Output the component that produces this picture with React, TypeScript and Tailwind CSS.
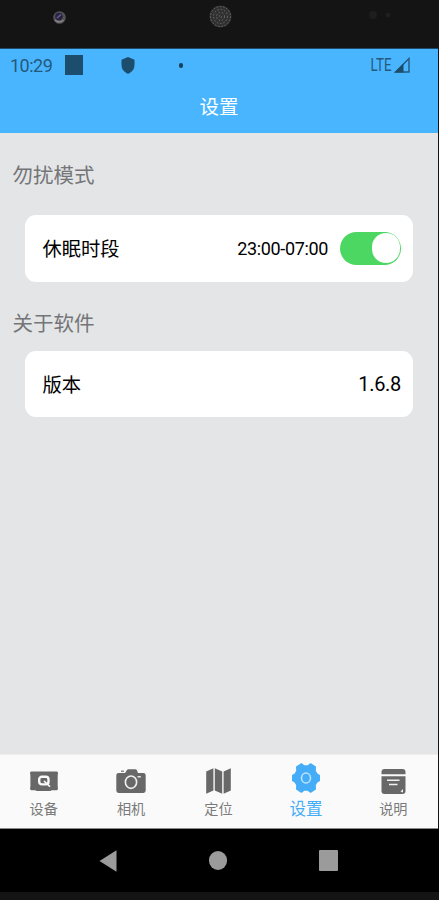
import { useState } from "react";
import type { ReactNode } from "react";

interface Tab {
  key: string;
  label: string;
  icon: ReactNode;
}

const tabs: Tab[] = [
  {
    key: "device",
    label: "设备",
    icon: (
      <svg width="28" height="20" viewBox="0 0 28 20">
        <path
          d="M1 0.5H27L28 1.5L27.7 5V15L28 18L27 19.2H22L20 20H7L5 19.2H1L0 18L0.4 15V5L0 1.5Z"
          fill="#686868"
        />
        <rect x="9.2" y="5.8" width="9.3" height="7.6" rx="2.6" fill="none" stroke="#fafafa" strokeWidth="2.4" />
        <path d="M14 10L20 15.6" stroke="#fafafa" strokeWidth="1.6" />
      </svg>
    ),
  },
  {
    key: "camera",
    label: "相机",
    icon: (
      <svg width="30" height="25" viewBox="0 0 30 25">
        <path
          d="M2.5 4H9L11 1Q11.4 0.3 12.3 0.3H19.5Q20.4 0.3 20.8 1L22 4H27.5Q29.7 4 29.7 6.2V21.6Q29.7 24 27.4 24H2.6Q0.3 24 0.3 21.6V6.2Q0.3 4 2.5 4Z"
          fill="#686868"
        />
        <path d="M5 3V1.5H8V3Z" fill="#8a8a8a" />
        <ellipse cx="15" cy="13.2" rx="5.6" ry="6.2" fill="none" stroke="#f0f0f0" strokeWidth="1.6" />
        <path d="M21.5 7.8H24.8" stroke="#f0f0f0" strokeWidth="1.4" />
      </svg>
    ),
  },
  {
    key: "map",
    label: "定位",
    icon: (
      <svg width="25" height="26" viewBox="0 0 25 26" fill="#686868">
        <path d="M0.2 3.5L7.4 0.2V22.5L0.2 25.8Z" />
        <path d="M8.8 0.2L16.2 3.5V25.8L8.8 22.5Z" />
        <path d="M17.6 3.5L24.8 0.2V22.5L17.6 25.8Z" />
      </svg>
    ),
  },
  {
    key: "settings",
    label: "设置",
    icon: (
      <svg width="28" height="30" viewBox="0 0 28 30">
        <path
          d="M9.5 1.2L12 3.2H16L18.5 1.2L23 4L22.8 8L24.5 11L27 12.5V17.5L24.5 19L22.8 22L23 26L18.5 28.8L16 26.8H12L9.5 28.8L5 26L5.2 22L3.5 19L1 17.5V12.5L3.5 11L5.2 8L5 4Z"
          fill="#45adf8"
          stroke="#45adf8"
          strokeWidth="2"
          strokeLinejoin="round"
        />
        <ellipse cx="14" cy="15" rx="4.5" ry="5" fill="none" stroke="#b9e3ff" strokeWidth="1.6" />
      </svg>
    ),
  },
  {
    key: "help",
    label: "说明",
    icon: (
      <svg width="25" height="25" viewBox="0 0 25 25">
        <path d="M3.5 0H21.5Q24.5 0 24.5 3V5.3H0.5V3Q0.5 0 3.5 0Z" fill="#686868" />
        <path d="M0.5 7.3H24.5V22Q24.5 25 21.5 25H3.5Q0.5 25 0.5 22Z" fill="#686868" />
        <path d="M6 11.3H18.5M8 15.5H16.5" stroke="#f0f0f0" strokeWidth="1.4" />
        <path d="M19.5 22.5L22 20V23.5Z" fill="#f0f0f0" />
      </svg>
    ),
  },
];

function Bezel() {
  return (
    <div className="h-12 bg-[#141414]">
      <svg width="439" height="48" viewBox="0 0 439 48">
        <circle cx="59.5" cy="17.5" r="6.3" fill="#555258" />
        <circle cx="59" cy="16.5" r="3.8" fill="#28243a" />
        <path d="M57 18L61 14.5" stroke="#655da0" strokeWidth="1.5" />
        <path d="M55 20Q59 24 63.5 20" stroke="#858188" strokeWidth="1.5" fill="none" />
        <circle cx="220.5" cy="16.5" r="11" fill="#303030" />
        <g fill="none" stroke="#707070" strokeDasharray="1.5 1.8">
          <circle cx="220.5" cy="16.5" r="10" />
          <circle cx="220.5" cy="16.5" r="7" />
          <circle cx="220.5" cy="16.5" r="4" />
          <circle cx="220.5" cy="16.5" r="1.2" />
        </g>
        <circle cx="373" cy="15" r="4" fill="#1e1e1e" />
        <circle cx="388" cy="15" r="2.5" fill="#1e1e1e" />
      </svg>
    </div>
  );
}

function StatusBar() {
  return (
    <div className="flex h-8 items-center pl-2.5 text-[18px] text-[#24597c]">
      <span className="w-[55px] tracking-[-0.5px]">10:29</span>
      <div className="h-5 w-[18px] bg-[#1d4d6d]" />
      <svg className="ml-[38px]" width="14" height="17" viewBox="0 0 14 17">
        <path d="M7 0L13.5 2.8V8Q13.5 14 7 17Q0.5 14 0.5 8V2.8Z" fill="#1d4d6d" />
      </svg>
      <div className="ml-[44px] h-[5px] w-1 rounded-full bg-[#183f5b]" />
      <span className="ml-auto mr-[3px] origin-right scale-x-[0.76] text-[17.5px]">LTE</span>
      <svg className="mr-[28px]" width="16" height="16" viewBox="0 0 16 16">
        <path d="M15 1.5V15H1.5Z" fill="none" stroke="#24597c" strokeWidth="1.4" />
        <path d="M0.5 15.5L9.5 6.5V15.5Z" fill="#1d4d6d" />
      </svg>
    </div>
  );
}

function Card({ label, children }: { label: string; children: ReactNode }) {
  return (
    <div className="ml-[24.5px] mr-[25px] flex h-[66.5px] items-center rounded-[11px] bg-white pl-[18px] pr-3 text-black">
      <span className="pt-[5px] text-[19.3px]">{label}</span>
      <div className="ml-auto flex items-center">{children}</div>
    </div>
  );
}

function App() {
  const [activeTab, setActiveTab] = useState("settings");
  const [sleepOn, setSleepOn] = useState(true);

  return (
    <div className="flex h-[900px] w-[439px] flex-col overflow-hidden bg-[#141414] font-['Roboto','Noto_Sans_CJK_SC',sans-serif]">
      <Bezel />
      <div className="flex h-[781px] w-[438px] flex-col bg-[#e4e5e7]">
        <div className="h-[84.5px] shrink-0 border-t border-[#1c4a6b] bg-[#4ab5ff]">
          <StatusBar />
          <h1 className="pt-[12px] text-center text-[19.5px] leading-[30px] text-white">设置</h1>
        </div>

        <div className="flex-1">
          <h2 className="pt-[28px] pl-[12.5px] text-[20.5px] leading-[30px] text-[#747577]">勿扰模式</h2>
          <div className="pt-[24.5px]">
            <Card label="休眠时段">
              <span className="text-[18px] tracking-[-0.35px]">23:00-07:00</span>
              <button
                className="ml-3 flex h-[33px] w-[61px] items-center rounded-full bg-[#4cd763] px-[1.5px]"
                onClick={() => setSleepOn(!sleepOn)}
              >
                <span className={sleepOn ? "ml-auto h-[30px] w-7 rounded-full bg-white" : "h-[30px] w-7 rounded-full bg-white"} />
              </button>
            </Card>
          </div>
          <h2 className="pt-[27px] pl-[12.5px] text-[20.5px] leading-[30px] text-[#747577]">关于软件</h2>
          <div className="pt-[12px]">
            <Card label="版本">
              <span className="text-[20px] tracking-[-0.3px]">1.6.8</span>
            </Card>
          </div>
        </div>

        <div className="flex h-[75px] shrink-0 border-t border-b border-t-[#eeeeef] border-b-[#8a8a8a] bg-[#fafafa] pr-px">
          {tabs.map((tab) => (
            <button
              key={tab.key}
              className="flex flex-1 flex-col items-center"
              onClick={() => setActiveTab(tab.key)}
            >
              <span className={activeTab === tab.key ? "flex h-[42px] items-center pt-[4px]" : "flex h-[42px] items-center pt-[10px]"}>
                {tab.icon}
              </span>
              <span
                className={
                  activeTab === tab.key
                    ? "pt-px text-[16.5px] leading-[24px] text-[#45adf8]"
                    : "text-[14.2px] leading-[24px] text-[#7a7a7a]"
                }
              >
                {tab.label}
              </span>
            </button>
          ))}
        </div>
      </div>

      <div className="flex h-[63px] items-center justify-between bg-black pr-[101px] pl-[99px]">
        <svg width="18" height="22" viewBox="0 0 18 22">
          <path d="M0.5 11L17.5 0.3V21.7Z" fill="#9b9b9b" />
        </svg>
        <div className="h-[19.5px] w-[18px] rounded-full bg-[#9b9b9b]" />
        <div className="h-[21px] w-[19px] rounded-[1px] bg-[#9b9b9b]" />
      </div>
    </div>
  );
}

export default App;
